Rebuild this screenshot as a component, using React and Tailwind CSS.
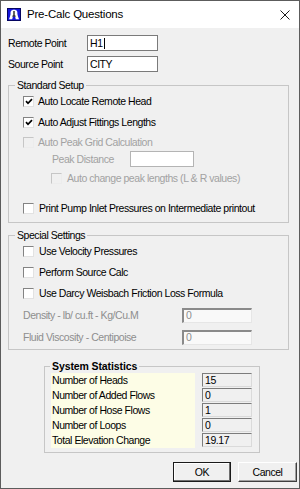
import React from 'react'

function CheckBox({ checked, disabled }) {
    const box = disabled
        ? 'bg-[#f0f0f0] border-t-[#c6c6c6] border-l-[#c6c6c6] border-r-[#ececec] border-b-[#ececec]'
        : 'bg-white border-t-[#838383] border-l-[#838383] border-r-[#e2e2e2] border-b-[#e2e2e2]'
    return (
        <span className={`flex h-[11px] w-[11px] shrink-0 items-center justify-center border ${box}`}>
            {checked && (
                <svg width="8" height="7" viewBox="0 0 8 7">
                    <path d="M1 3.2 L3 5.3 L7 1.2" fill="none" stroke="#000" strokeWidth="1.7" />
                </svg>
            )}
        </span>
    )
}

function CheckRow({ label, checked, disabled, className, gap }) {
    return (
        <div className={`flex items-center ${className}`}>
            <CheckBox checked={checked} disabled={disabled} />
            <span className={`${gap} ${disabled ? 'text-[#a2a2a2]' : 'text-black'}`}>{label}</span>
        </div>
    )
}

function AppIcon() {
    return (
        <svg width="14" height="13" viewBox="0 0 14 13">
            <rect x="0.5" y="0.5" width="13" height="12" fill="#1616dc" stroke="#050560" />
            <path d="M7 1.8 C3.8 1.8 3.4 4 3.6 6 L3 8.6 L2 11.2 L5.2 11.2 L5.9 8.6 L8.1 8.6 L8.8 11.2 L12 11.2 L11 8.6 L10.4 6 C10.6 4 10.2 1.8 7 1.8Z" fill="#fff" />
            <rect x="6.4" y="3" width="1.2" height="5" fill="#000" />
            <rect x="5.4" y="7.6" width="3.2" height="1" fill="#000" />
        </svg>
    )
}

const stats = [
    ['Number of Heads', '15'],
    ['Number of Added Flows', '0'],
    ['Number of Hose Flows', '1'],
    ['Number of Loops', '0'],
    ['Total Elevation Change', '19.17'],
]

export default function App() {
    return (
        <div className="w-[300px] h-[489px] flex flex-col overflow-hidden border border-[#5c5c5c] bg-[#f0f0f0] font-['Liberation_Sans',Arial,sans-serif] text-[10.5px] tracking-[-0.45px] leading-none text-black">
            {/* title bar */}
            <div className="flex h-[27px] shrink-0 items-center bg-white pl-[6px] pr-[9px]">
                <AppIcon />
                <span className="ml-[6px] text-[11.5px] tracking-[-0.2px] text-black">Pre-Calc Questions</span>
                <svg className="ml-auto" width="10" height="10" viewBox="0 0 10 10">
                    <path d="M0.5 0.5 L9.5 9.5 M9.5 0.5 L0.5 9.5" stroke="#1a1a1a" strokeWidth="1" />
                </svg>
            </div>

            <div className="flex flex-col pt-[7px]">
                <div className="flex h-[16px] items-center pl-[7px]">
                    <span className="w-[79px]">Remote Point</span>
                    <div className="flex h-[16px] w-[71px] items-center border border-[#7a7a7a] bg-white pl-[2px]">
                        <span>H1</span>
                        <span className="ml-[1px] h-[11px] w-[1px] bg-black"></span>
                    </div>
                </div>
                <div className="mt-[5px] flex h-[16px] items-center pl-[7px]">
                    <span className="w-[79px]">Source Point</span>
                    <div className="flex h-[16px] w-[71px] items-center border border-[#7a7a7a] bg-white pl-[2px]">
                        <span>CITY</span>
                    </div>
                </div>

                {/* standard setup */}
                <fieldset className="ml-[7px] mt-[7px] w-[281px] border border-[#c6c6c6]">
                    <legend className="ml-[6px] px-[2px] leading-[12px]">Standard Setup</legend>
                    <div className="flex flex-col pl-[14px] pb-[4px]">
                        <CheckRow className="h-[21px]" gap="ml-[4px]" checked label="Auto Locate Remote Head" />
                        <CheckRow className="h-[21px]" gap="ml-[4px]" checked label="Auto Adjust Fittings Lengths" />
                        <CheckRow className="h-[18px]" gap="ml-[4px]" disabled label="Auto Peak Grid Calculation" />
                        <div className="flex h-[16px] items-center pl-[29px]">
                            <span className="w-[78px] text-[#a2a2a2]">Peak Distance</span>
                            <div className="h-[16px] w-[64px] border border-[#b4b4b4] bg-white"></div>
                        </div>
                        <CheckRow className="h-[23px] pl-[28px]" gap="ml-[5px]" disabled label="Auto change peak lengths (L & R values)" />
                        <CheckRow className="mt-[8px] h-[20px]" gap="ml-[5px]" label="Print Pump Inlet Pressures on Intermediate printout" />
                    </div>
                </fieldset>

                {/* special settings */}
                <fieldset className="ml-[7px] mt-[6px] w-[281px] border border-[#c6c6c6]">
                    <legend className="ml-[6px] px-[2px] leading-[12px]">Special Settings</legend>
                    <div className="flex flex-col pl-[14px] pb-[1px]">
                        <CheckRow className="h-[21px]" gap="ml-[5px]" label="Use Velocity Pressures" />
                        <CheckRow className="h-[21px]" gap="ml-[5px]" label="Perform Source Calc" />
                        <CheckRow className="h-[21px]" gap="ml-[5px]" label="Use Darcy Weisbach Friction Loss Formula" />
                        <div className="flex h-[22px] items-center">
                            <span className="w-[159px] text-[#8e8e8e]">Density - lb/ cu.ft - Kg/Cu.M</span>
                            <div className="flex h-[15px] w-[70px] items-center border-t-2 border-l-2 border-r border-b border-t-[#8a8a8a] border-l-[#8a8a8a] border-r-[#e6e6e6] border-b-[#e6e6e6] bg-[#f9f9f9] pl-[2px] text-[#8e8e8e]">0</div>
                        </div>
                        <div className="flex h-[22px] items-center">
                            <span className="w-[159px] text-[#8e8e8e]">Fluid Viscosity - Centipoise</span>
                            <div className="flex h-[15px] w-[70px] items-center border-t-2 border-l-2 border-r border-b border-t-[#8a8a8a] border-l-[#8a8a8a] border-r-[#e6e6e6] border-b-[#e6e6e6] bg-[#f9f9f9] pl-[2px] text-[#8e8e8e]">0</div>
                        </div>
                    </div>
                </fieldset>

                {/* system statistics */}
                <fieldset className="ml-[43px] mt-[10px] w-[216px] border border-[#c6c6c6]">
                    <legend className="ml-[5px] px-[2px] text-[10.5px] font-bold tracking-[-0.1px] leading-[12px]">System Statistics</legend>
                    <div className="flex pl-[6px] pt-[1px] pb-[4px]">
                        <div className="flex w-[144px] flex-col bg-[#fdfde6]">
                            {stats.map((s, n) => (
                                <div className="h-[15px] pl-[1px] leading-[15px]" key={n}>{s[0]}</div>
                            ))}
                        </div>
                        <div className="ml-[7px] flex w-[50px] flex-col gap-[1px]">
                            {stats.map((s, n) => (
                                <div className="flex h-[14px] items-center border border-t-[#7c7c7c] border-l-[#7c7c7c] border-r-[#dadada] border-b-[#dadada] pl-[2px]" key={n}>{s[1]}</div>
                            ))}
                        </div>
                    </div>
                </fieldset>

                <div className="mt-[9px] flex justify-end gap-[7px] pr-[2px]">
                    <button className="flex h-[20px] w-[58px] items-center justify-center border border-[#1a1a1a] bg-[#f0f0f0] shadow-[inset_-1px_-1px_0_#6e6e6e,inset_1px_1px_0_#ffffff]">OK</button>
                    <button className="flex h-[20px] w-[59px] items-center justify-center border border-t-white border-l-white border-r-[#3f3f3f] border-b-[#3f3f3f] bg-[#f0f0f0] shadow-[inset_-1px_-1px_0_#a0a0a0]">Cancel</button>
                </div>
            </div>
        </div>
    )
}
